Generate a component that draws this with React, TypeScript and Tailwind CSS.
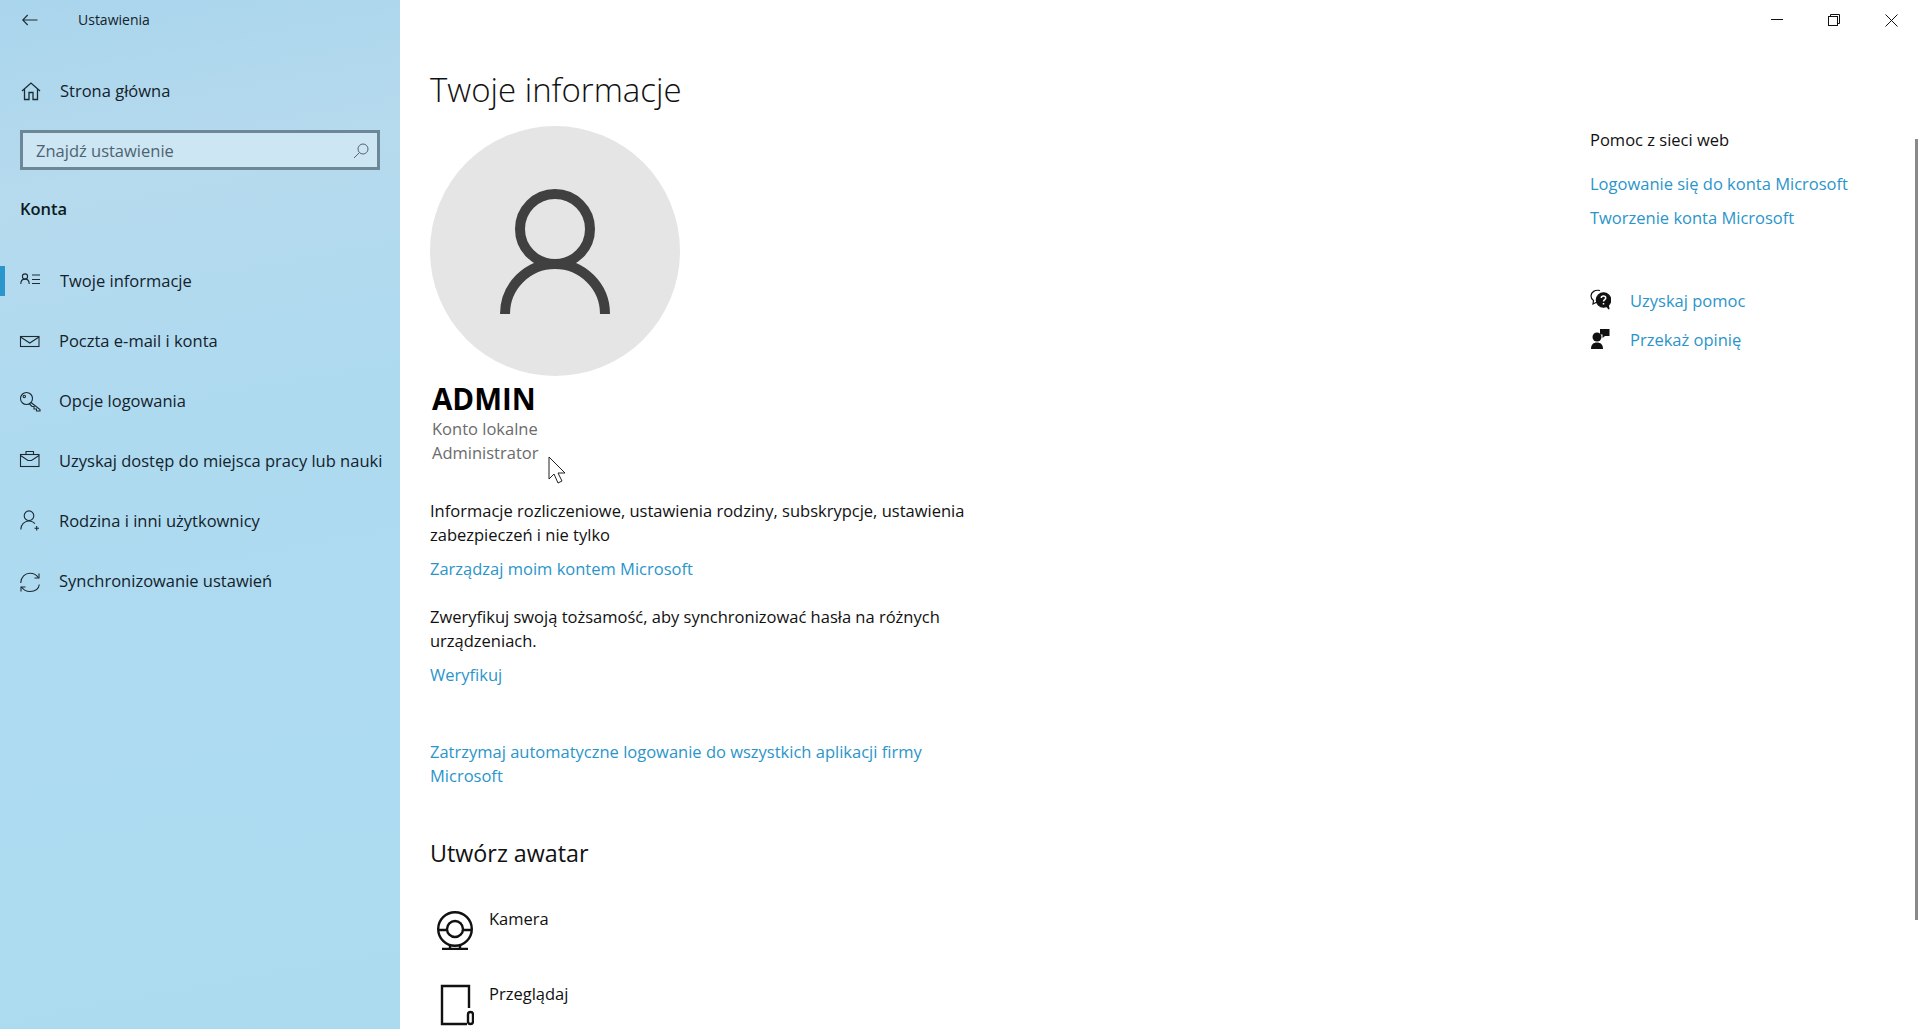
import React from 'react';

const navItems = [
    { label: 'Twoje informacje', icon: 'info', active: true },
    { label: 'Poczta e-mail i konta', icon: 'mail' },
    { label: 'Opcje logowania', icon: 'key' },
    { label: 'Uzyskaj dostęp do miejsca pracy lub nauki', icon: 'work' },
    { label: 'Rodzina i inni użytkownicy', icon: 'family' },
    { label: 'Synchronizowanie ustawień', icon: 'sync' },
];

const NavIcon: React.FC<{ name: string }> = ({ name }) => {
    const common = { width: 22, height: 24, viewBox: '0 0 22 24', fill: 'none', stroke: '#1c2a33', strokeWidth: 1.1 };
    switch (name) {
        case 'info':
            return (
                <svg {...common}>
                    <circle cx="6" cy="7.500" r="2.600" />
                    <path d="M1.800 15c0-3 1.800-4.900 4.200-4.900s4.200 1.900 4.200 4.900" />
                    <path d="M13 6h8M13 10.500h8M13 14.500h8" />
                </svg>
            );
        case 'mail':
            return (
                <svg {...common}>
                    <rect x="1.500" y="7.500" width="18.500" height="10" />
                    <path d="M1.500 8l9.250 6L20 8" />
                </svg>
            );
        case 'key':
            return (
                <svg {...common}>
                    <circle cx="7.500" cy="9.500" r="6" />
                    <circle cx="5.300" cy="7.500" r="1.200" />
                    <path d="M12 13.500l9 7v1.500h-3.500v-2h-2.500v-2.500h-2l-2.500-2.500" />
                </svg>
            );
        case 'work':
            return (
                <svg {...common}>
                    <rect x="1.500" y="5.500" width="18.500" height="12" />
                    <path d="M7 5.500V2.500h7.500v3" />
                    <path d="M1.500 6.500l7.500 5h3.500l7.500-5" />
                </svg>
            );
        case 'family':
            return (
                <svg {...common}>
                    <circle cx="10" cy="6.700" r="4.800" />
                    <path d="M1.800 20.500c0-5 3.700-8.500 8.200-8.500 2.500 0 4.500 1 6 2.600" />
                    <path d="M17.700 17v4.500M15.500 19.300h4.500" />
                </svg>
            );
        default:
            return (
                <svg {...common}>
                    <path d="M1.700 14C2 8 6 4.300 11 4.300c3.800 0 6.700 1.700 8.500 4.500" />
                    <path d="M20 4.500v4.500h-4.500" />
                    <path d="M20.300 15.500c-.6 4.500-4.500 7-9.300 7-3.800 0-6.700-1.700-8.500-4.500" />
                    <path d="M2 22.500V18h4.500" />
                </svg>
            );
    }
};

const linkClass = 'text-[#2b95ca]';

const App: React.FC = () => {
    return (
        <div className="flex h-screen w-full overflow-hidden bg-white font-['Open_Sans',sans-serif] text-[16.5px] leading-6 text-[#111]">
            {/* Sidebar */}
            <aside className="flex w-[400px] shrink-0 flex-col bg-[linear-gradient(170deg,#a9d5ec_0%,#b6daee_18%,#aedaf0_40%,#acdbf0_100%)]">
                <div className="flex h-10 items-center">
                    <svg className="ml-[22px]" width="16" height="12" viewBox="0 0 16 12" fill="none" stroke="#1c2a33" strokeWidth="1.1">
                        <path d="M15.500 6H.700M5.700 1L.700 6l5 5" />
                    </svg>
                    <span className="ml-[40px] text-[14px] text-[#14222b]">Ustawienia</span>
                </div>
                <div className="mt-[31px] flex h-10 items-center">
                    <svg className="ml-[21px]" width="20" height="20" viewBox="0 0 20 20" fill="none" stroke="#1c2a33" strokeWidth="1.3">
                        <path d="M1 10l9-8 9 8M3.500 8v10.500h4.500v-7h4v7h4.500V8" />
                    </svg>
                    <span className="ml-[19px] text-[#14222b]">Strona główna</span>
                </div>
                <div className="mx-5 mt-[19px] flex h-10 items-center justify-between border-[3px] border-[#6c8796] bg-[#cde6f4] pt-px pr-[8px] pl-[12px] text-[#4e636f]">
                    <span className="ml-px">Znajdź ustawienie</span>
                    <svg width="16" height="16" viewBox="0 0 16 16" fill="none" stroke="#51666f" strokeWidth="1">
                        <circle cx="10" cy="6" r="5" />
                        <path d="M6.500 9.500L1 15" />
                    </svg>
                </div>
                <div className="mt-[26px] ml-5 pt-px font-semibold text-[#0d1a22]">Konta</div>
                <nav className="mt-[30px] flex flex-col">
                    {navItems.map(item => (
                        <div key={item.label} className="relative flex h-[60px] items-center pl-[19px]">
                            {item.active && <div className="absolute top-[15px] left-0 h-[30px] w-[5px] bg-[#2a96cc]" />}
                            <NavIcon name={item.icon} />
                            <span className={`${item.active ? 'ml-[19px]' : 'ml-[18px]'} whitespace-nowrap text-[#14222b]`}>{item.label}</span>
                        </div>
                    ))}
                </nav>
            </aside>

            {/* Main */}
            <main className="relative flex min-w-0 flex-1 flex-col">
                <div className="flex h-10 shrink-0 justify-end">
                    <div className="flex w-[58px] items-center justify-center pb-px">
                        <div className="h-px w-3 bg-[#111]" />
                    </div>
                    <div className="flex w-[56px] items-center justify-center">
                        <svg width="12" height="12" viewBox="0 0 12 12" fill="none" stroke="#111" strokeWidth="1">
                            <rect x="0.500" y="2.500" width="9" height="9" />
                            <path d="M2.500 2.500v-2h9v9h-2" />
                        </svg>
                    </div>
                    <div className="flex w-[58px] items-center justify-center">
                        <svg width="13" height="13" viewBox="0 0 13 13" fill="none" stroke="#111" strokeWidth="1">
                            <path d="M.500.500l12 12M12.500.500l-12 12" />
                        </svg>
                    </div>
                </div>
                <div className="flex flex-1 justify-between pl-[30px]">
                    <div className="w-[560px]">
                        <h1 className="mt-[28px] text-[33px] leading-[44px] font-light text-[#111]">Twoje informacje</h1>
                        <div className="mt-[14px] flex h-[250px] w-[250px] items-center justify-center rounded-full bg-[#e5e5e5]">
                            <svg width="110" height="125" viewBox="0 0 110 125" fill="none" stroke="#404040" strokeWidth="10">
                                <circle cx="55" cy="40" r="35" />
                                <path d="M5 125A50 50 0 0 1 105 125" />
                            </svg>
                        </div>
                        <div className="relative">
                            <div className="mt-1 ml-[2px] text-[29.5px] leading-[37px] font-bold text-black">ADMIN</div>
                            <div className="ml-[2px] text-[#6b6b6b]">Konto lokalne</div>
                            <div className="ml-[2px] text-[#6b6b6b]">Administrator</div>
                            {/* mouse cursor */}
                            <svg className="absolute top-[76px] left-[118px]" width="20" height="29" viewBox="0 0 20 29" fill="white" stroke="#222" strokeWidth="1">
                                <path d="M1 1v22l5-5 4 9 4-2-4-8h7z" />
                            </svg>
                        </div>
                        <p className="mt-[34px]">Informacje rozliczeniowe, ustawienia rodziny, subskrypcje, ustawienia zabezpieczeń i nie tylko</p>
                        <div className={`mt-[10px] ${linkClass}`}>Zarządzaj moim kontem Microsoft</div>
                        <p className="mt-[24px]">Zweryfikuj swoją tożsamość, aby synchronizować hasła na różnych urządzeniach.</p>
                        <div className={`mt-[10px] ${linkClass}`}>Weryfikuj</div>
                        <p className={`mt-[53px] ${linkClass}`}>Zatrzymaj automatyczne logowanie do wszystkich aplikacji firmy Microsoft</p>
                        <h2 className="mt-[49px] text-[23.3px] leading-8">Utwórz awatar</h2>
                        <div className="mt-[38px] flex items-start pl-[5px]">
                            <svg className="mt-[3px]" width="40" height="40" viewBox="0 0 40 40" fill="none" stroke="#111" strokeWidth="2.400">
                                <circle cx="20" cy="19" r="16.800" />
                                <circle cx="20" cy="19" r="8" />
                                <path d="M3 20h9M28 20h9M15 35v4M25 35v4M7 39h26" />
                            </svg>
                            <span className="ml-[14px]">Kamera</span>
                        </div>
                        <div className="mt-[32px] flex items-start pl-[10px]">
                            <svg className="mt-[2px]" width="34" height="42" viewBox="0 0 34 42" fill="none" stroke="#111" strokeWidth="2.400">
                                <path d="M27 40H2V2h27v22" />
                                <rect x="28" y="28" width="5" height="12" rx="2.500" />
                            </svg>
                            <span className="ml-[15px]">Przeglądaj</span>
                        </div>
                    </div>
                    <div className="w-[330px] shrink-0">
                        <div className="mt-[88px]">Pomoc z sieci web</div>
                        <div className={`mt-[20px] ${linkClass}`}>Logowanie się do konta Microsoft</div>
                        <div className={`mt-[10px] ${linkClass}`}>Tworzenie konta Microsoft</div>
                        <div className="mt-[59px] flex h-6 items-center gap-[19px]">
                            <svg className="-mt-[3px]" width="21" height="21" viewBox="0 0 21 21" fill="none" stroke="#111" strokeWidth="1.200">
                                <path d="M10 1.500C5 .500 1 3 1 7c0 2 1 3.500 2.500 4.500L3 15l4-2" />
                                <circle cx="13.500" cy="11" r="7.200" fill="#111" />
                                <path d="M16.500 17l2.500 3-1-5z" fill="#111" />
                                <path d="M11.300 9c0-2.800 4.400-2.800 4.400 0 0 1.700-2.200 1.500-2.200 3.500M13.500 14v1.500" stroke="#fff" strokeWidth="1.500" />
                            </svg>
                            <span className={linkClass}>Uzyskaj pomoc</span>
                        </div>
                        <div className="mt-[15px] flex h-6 items-center gap-[19px]">
                            <svg className="-mt-[3px]" width="21" height="21" viewBox="0 0 21 21" fill="#111">
                                <circle cx="7" cy="9" r="4.500" />
                                <path d="M1 21c0-4.500 2.500-6.500 6-6.500s6 2 6 6.500z" />
                                <path d="M10 1h9.500v7H15l-2.500 2V6.500H10z" />
                            </svg>
                            <span className={linkClass}>Przekaż opinię</span>
                        </div>
                    </div>
                </div>
                <div className="absolute top-[139px] right-[2px] h-[781px] w-[3px] bg-[#8a8a8a]" />
            </main>
        </div>
    );
};

export default App;
